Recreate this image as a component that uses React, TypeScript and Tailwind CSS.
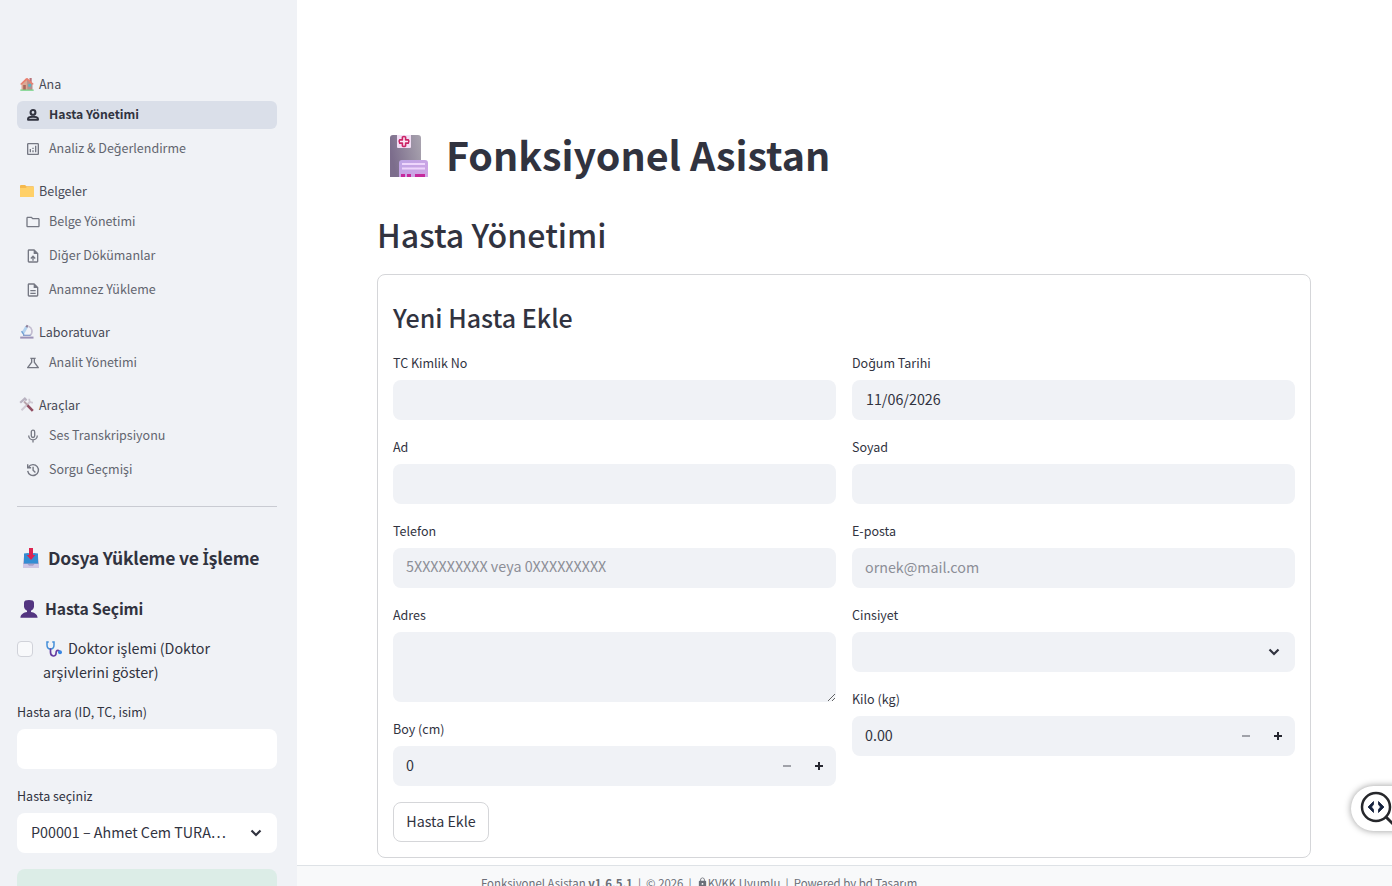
import type { ReactNode } from "react";
import { clsx } from "clsx";
import {
  MdOutlineAnalytics,
  MdOutlineDescription,
  MdOutlineFolder,
  MdOutlineScience,
  MdOutlineUploadFile,
  MdLock,
} from "react-icons/md";

const PersonIcon = () => (
  <svg
    width="16"
    height="16"
    viewBox="0 0 16 16"
    fill="none"
    stroke="#31333f"
    strokeWidth="2.1"
    strokeLinejoin="round"
  >
    <circle cx="8" cy="5.4" r="2.4" />
    <path d="M3.1 12.7v-.9c0-1.4 2.7-2.1 4.9-2.1s4.9.7 4.9 2.1v.9z" />
  </svg>
);

const MicIcon = () => (
  <svg width="16" height="16" viewBox="0 0 16 16" fill="none" stroke="currentColor" strokeWidth="1.3">
    <rect x="6.3" y="2.2" width="3.4" height="7.3" rx="1.7" />
    <path d="M3.7 7.5a4.3 4.3 0 0 0 8.6 0M8 11.800v2.600" />
  </svg>
);

const HistoryIcon = () => (
  <svg width="16" height="16" viewBox="0 0 16 16" fill="none" stroke="currentColor" strokeWidth="1.4">
    <path d="M2.700 8.800A5.400 5.400 0 1 0 3.600 5" />
    <path d="M2.700 2.300v3.400h3.400M8.100 4.800v3.500l2.300 2.200" />
  </svg>
);

const HouseEmoji = () => (
  <svg width="16" height="16" viewBox="0 0 16 16">
    <path d="M10.5 2h2.2v4h-2.2z" fill="#b9737a" />
    <path d="M2.5 7.5 8 3l5 4.5V14H2.5z" fill="#dba994" />
    <path d="M8 3.2 13.5 8v6H8.4z" fill="#b98f8b" />
    <path d="M1.2 8 7 2.2 8.4 2 14.8 8l-1.2.8L8 4 2.2 9z" fill="#e88070" />
    <path d="M4.2 9h2.6v5H4.2z" fill="#a9685c" />
    <path d="M9.3 8h2.8v2.7H9.3z" fill="#56b8c5" />
    <path d="M1.3 13.5h13.4v1.3H1.3z" fill="#76d287" />
  </svg>
);

const FolderEmoji = () => (
  <svg width="16" height="16" viewBox="0 0 16 16">
    <path d="M1 3a1 1 0 0 1 1-1h4l1.5 1.3H14a1 1 0 0 1 1 1V13a1 1 0 0 1-1 1H2a1 1 0 0 1-1-1z" fill="#f5b94e" />
    <path d="M1 5h5.5L8 4h7v9a1 1 0 0 1-1 1H2a1 1 0 0 1-1-1z" fill="#ffd068" />
  </svg>
);

const MicroscopeEmoji = () => (
  <svg width="16" height="16" viewBox="0 0 16 16" fill="none">
    <path d="M9.5 2.2c3.6 1.3 4.9 6 1.6 9.3" stroke="#c3bdd0" strokeWidth="1.6" />
    <path d="M7.8 2.6 3.7 9.4" stroke="#b4d2ef" strokeWidth="3" />
    <path d="m8.6 1.2-1.2 2" stroke="#8b7c96" strokeWidth="2" />
    <path d="M2.6 7.2 5 11" stroke="#6f9fd2" strokeWidth="1.3" />
    <path d="M4 11.3h7.5" stroke="#8297c8" strokeWidth="1.2" />
    <path d="M1.2 13.6h13.3" stroke="#9c92b7" strokeWidth="2" />
  </svg>
);

const ToolsEmoji = () => (
  <svg width="16" height="16" viewBox="0 0 16 16" fill="none">
    <path d="m2.5 13.2 9-9" stroke="#cfcad4" strokeWidth="2" />
    <path d="M10.2 1.8c0 3 1.2 4 3.8 3.8" stroke="#cfcad4" strokeWidth="1.8" />
    <path d="m1.2 5.8 4.6-4.2 1.8 2" stroke="#b9b3c1" strokeWidth="2.2" />
    <path d="m5 4.5 4 4" stroke="#b9a5ad" strokeWidth="1.8" />
    <path d="m8.5 8.3 5.3 5.6" stroke="#914e62" strokeWidth="2.6" />
  </svg>
);

const InboxEmoji = () => (
  <svg width="20" height="22" viewBox="0 0 20 22">
    <path d="M3.2 8h13.6l1.2 10v2.5H2V18z" fill="#a8a0c8" />
    <path d="M3 6.5 7 6l3 1 3-1 4 .5v10H3z" fill="#338dd3" />
    <path d="M2 17h4.5l1.5 1.8h4l1.5-1.8H18v3.5H2z" fill="#cfc6e6" />
    <path d="M8 1h4v7h2.3L10 13 5.700 8H8z" fill="#dd2450" />
  </svg>
);

const BustEmoji = () => (
  <svg width="18" height="20" viewBox="0 0 18 20" fill="#533580">
    <path d="M4 3.5C4 1.8 6 1 9 1s5 .8 5 2.500v3.700C14 10 11.500 12 9 12S4 10 4 7.200z" />
    <path d="M7 10.500h4v2.600c3 .6 6.400 2 6.600 5.700H.4C.6 15.100 4 13.700 7 13.100z" />
  </svg>
);

const StethoscopeEmoji = () => (
  <svg width="18" height="18" viewBox="0 0 18 18" fill="none" strokeLinecap="round">
    <path d="M3.2 2H2v3c0 2.7 1.6 4 3.500 4S9 7.700 9 5V2H7.800" stroke="#438fd9" strokeWidth="1.5" />
    <path d="M5.5 9v3.300c0 4.800 5.500 4.600 5.500 1.200 0-3.200 1.700-3.900 3.500-2.200" stroke="#643ba0" strokeWidth="1.7" />
    <circle cx="15" cy="12.3" r="2" fill="#3987e3" />
  </svg>
);

const HospitalEmoji = () => (
  <svg width="40" height="44" viewBox="0 0 40 44">
    <defs>
      <linearGradient id="tower" x1="0" x2="1" y1="0.3" y2="0">
        <stop stopColor="#7c6d8c" />
        <stop offset="1" stopColor="#aaa5b0" />
      </linearGradient>
      <linearGradient id="annex" x1="0" x2="1" y1="0" y2="1">
        <stop stopColor="#bea6e6" />
        <stop offset="1" stopColor="#d2a4e4" />
      </linearGradient>
    </defs>
    <path d="M1 4q0-3 3-3h25q3 0 3 3v39H1z" fill="url(#tower)" />
    <path d="M8 1h14v12q0 1-1 1H9q-1 0-1-1z" fill="#f2def5" />
    <path
      d="M13.4 3.2q1.6-1.4 3.2 0v2.700h2.700q1.400 1.600 0 3.200h-2.700v2.700q-1.600 1.400-3.200 0V9.100h-2.700q-1.400-1.600 0-3.200h2.700z"
      fill="#fce6f6"
      stroke="#cb2466"
      strokeWidth="1.6"
      strokeLinejoin="round"
    />
    <path d="M10 29q0-3 3-3h23q3 0 3 3v14H10z" fill="url(#annex)" />
    <path d="M13 30h23M13 34.5h23" stroke="#eed6fc" strokeWidth="2" />
    <path d="M12 40h4v3h-4zm6 0h4v3h-4zm8 0h10v3H26z" fill="#c52a9c" />
  </svg>
);

const Chevron = () => (
  <svg
    width="12"
    height="8"
    viewBox="0 0 12 8"
    fill="none"
    stroke="#31333f"
    strokeWidth="2.2"
  >
    <path d="M1.5 1.5 6 6l4.500-4.500" />
  </svg>
);

const navSections = [
  {
    title: "Ana",
    emoji: <HouseEmoji />,
    links: [
      { label: "Hasta Yönetimi", icon: <PersonIcon />, active: true },
      { label: "Analiz & Değerlendirme", icon: <MdOutlineAnalytics /> },
    ],
  },
  {
    title: "Belgeler",
    emoji: <FolderEmoji />,
    links: [
      { label: "Belge Yönetimi", icon: <MdOutlineFolder /> },
      { label: "Diğer Dökümanlar", icon: <MdOutlineUploadFile /> },
      { label: "Anamnez Yükleme", icon: <MdOutlineDescription /> },
    ],
  },
  {
    title: "Laboratuvar",
    emoji: <MicroscopeEmoji />,
    links: [{ label: "Analit Yönetimi", icon: <MdOutlineScience /> }],
  },
  {
    title: "Araçlar",
    emoji: <ToolsEmoji />,
    links: [
      { label: "Ses Transkripsiyonu", icon: <MicIcon /> },
      { label: "Sorgu Geçmişi", icon: <HistoryIcon /> },
    ],
  },
];

type NavLinkProps = { label: string; icon: ReactNode; active?: boolean };

const NavLink = ({ label, icon, active }: NavLinkProps) => (
  <a
    className={clsx(
      "flex h-7 items-center gap-2 rounded-md pl-2",
      active
        ? "bg-[#dadfe9] text-[12.2px] font-bold text-[#31333f]"
        : "text-[12.5px] text-[#62656f]",
    )}
  >
    <span className="flex w-4 shrink-0 justify-center text-[16px] text-[#757883]">
      {icon}
    </span>
    <span className="pb-0.5 leading-5">{label}</span>
  </a>
);

type FieldProps = { label: string; children: ReactNode };

const Field = ({ label, children }: FieldProps) => (
  <div>
    <label className="block h-7 text-[12.5px] leading-[22px]">{label}</label>
    {children}
  </div>
);

type TextInputProps = {
  value?: string;
  placeholder?: string;
  className?: string;
};

const TextInput = ({ value, placeholder, className }: TextInputProps) => (
  <input
    readOnly
    value={value ?? ""}
    placeholder={placeholder}
    className={clsx(
      "block h-10 w-full rounded-lg pr-3 text-[14.3px] outline-none placeholder:text-[#8c8e97]",
      className ?? "bg-[#f0f2f6] pb-1 pl-[13px]",
    )}
  />
);

const NumberInput = ({ value }: { value: string }) => (
  <div className="flex h-10 items-center rounded-lg bg-[#f0f2f6] pl-[13px] text-[14.3px]">
    <span className="flex-1 pb-0.5">{value}</span>
    <button className="flex w-8 justify-center">
      <svg width="10" height="10" stroke="#a0a2a9" strokeWidth="2">
        <path d="M1 5h8" />
      </svg>
    </button>
    <button className="mr-px flex w-8 justify-center">
      <svg width="10" height="10" stroke="#262730" strokeWidth="2">
        <path d="M1 5h8M5 1v8" />
      </svg>
    </button>
  </div>
);

const Sidebar = () => (
  <aside className="h-full w-[297px] shrink-0 overflow-hidden bg-[#f0f2f6] pr-5 pl-[17px]">
    <nav className="flex flex-col gap-[15px] pt-[71px]">
      {navSections.map((section) => (
        <div key={section.title}>
          <div className="mb-1 flex h-[26px] items-center gap-1 pl-0.5 text-[12.5px] text-[#484b57]">
            {section.emoji}
            <span>{section.title}</span>
          </div>
          <div className="flex flex-col gap-1.5">
            {section.links.map((link) => (
              <NavLink key={link.label} {...link} />
            ))}
          </div>
        </div>
      ))}
    </nav>
    <hr className="mt-[22px] border-[#c9cbd2]" />
    <h2 className="mt-9 flex h-[30px] items-center gap-[7px] pl-1 text-[17.5px] font-bold tracking-[-0.2px] whitespace-nowrap">
      <InboxEmoji />
      <span className="leading-7">
        Dosya Yükleme ve{" "}
        <span className="font-['Noto_Sans'] font-semibold">İ</span>şleme
      </span>
    </h2>
    <h3 className="mt-[21px] flex h-[30px] items-center gap-[7px] pl-[3px] text-[15.7px] font-bold tracking-[-0.1px]">
      <BustEmoji />
      <span>Hasta Seçimi</span>
    </h3>
    <label className="mt-[13px] flex gap-2.5 text-[14.3px] leading-6">
      <span className="mt-1 size-4 shrink-0 rounded border border-[#d0d2d9] bg-[#f8f9fb]" />
      <span className="-mt-px mb-px">
        <span className="mr-[5px] ml-0.5 inline-block align-[-4px]">
          <StethoscopeEmoji />
        </span>
        Doktor işlemi (Doktor
        <br />
        arşivlerini göster)
      </span>
    </label>
    <div className="mt-4 flex flex-col gap-4">
      <Field label="Hasta ara (ID, TC, isim)">
        <TextInput className="bg-white pl-3" />
      </Field>
      <Field label="Hasta seçiniz">
        <div className="flex h-10 items-center justify-between rounded-lg bg-white pr-[15px] pl-3.5 text-[14.3px]">
          <span className="pb-0.5">P00001 – Ahmet Cem TURA…</span>
          <Chevron />
        </div>
      </Field>
      <div className="h-14 rounded-lg bg-[#dcede7]" />
    </div>
  </aside>
);

const PatientForm = () => (
  <form className="h-[584px] rounded-lg border border-[#d5d6d9] px-[15px] pt-6">
    <h3 className="h-[53px] text-[25px] leading-[36px] font-medium">
      Yeni Hasta Ekle
    </h3>
    <div className="grid grid-cols-2 items-start gap-4">
      <div className="flex flex-col gap-4">
        <Field label="TC Kimlik No">
          <TextInput />
        </Field>
        <Field label="Ad">
          <TextInput />
        </Field>
        <Field label="Telefon">
          <TextInput
            placeholder="5XXXXXXXXX veya 0XXXXXXXXX"
            className="bg-[#f0f2f6] pb-1.5 pl-[13px]"
          />
        </Field>
        <Field label="Adres">
          <textarea
            readOnly
            className="block h-[70px] w-full resize-y rounded-lg bg-[#f0f2f6]"
          />
        </Field>
        <Field label="Boy (cm)">
          <NumberInput value="0" />
        </Field>
      </div>
      <div className="flex flex-col gap-4">
        <Field label="Doğum Tarihi">
          <TextInput value="11/06/2026" className="bg-[#f0f2f6] pb-1 pl-3.5" />
        </Field>
        <Field label="Soyad">
          <TextInput />
        </Field>
        <Field label="E-posta">
          <TextInput placeholder="ornek@mail.com" />
        </Field>
        <Field label="Cinsiyet">
          <div className="flex h-10 items-center justify-end rounded-lg bg-[#f0f2f6] pr-[15px]">
            <Chevron />
          </div>
        </Field>
        <Field label="Kilo (kg)">
          <NumberInput value="0.00" />
        </Field>
      </div>
    </div>
    <button className="mt-4 h-10 w-24 rounded-lg border border-[#d5d6d9] pb-0.5 text-[14.3px]">
      Hasta Ekle
    </button>
  </form>
);

const Footer = () => (
  <footer className="mt-[7px] flex h-10 items-start border-t border-[#dee2e6] bg-[#f8f9fa] pt-[7px] pl-[184px] text-[11.4px] leading-5 whitespace-pre text-[#6c6f78]">
    <span>
      Fonksiyonel Asistan <b className="font-bold">v1.6.5.1</b>
      {"  |  © 2026  |  "}
    </span>
    <MdLock className="mt-1 text-[11px]" />
    <span>{"KVKK Uyumlu  |  Powered by bd Tasarım"}</span>
  </footer>
);

const App = () => {
  return (
    <div className="relative flex h-[886px] w-full overflow-hidden bg-white font-['Noto_Sans_CJK_SC','Noto_Sans',sans-serif] text-[#31333f]">
      <Sidebar />
      <main className="flex-1">
        <div className="pr-[81px] pl-20">
          <h1 className="mt-[123px] flex h-[66px] items-center gap-[17px] pl-3 text-[39.4px] font-bold">
            <HospitalEmoji />
            <span className="pb-1 leading-[56px]">Fonksiyonel Asistan</span>
          </h1>
          <h2 className="mt-[19px] mb-[14px] h-[52px] text-[32.1px] leading-[52px] font-medium">
            Hasta Yönetimi
          </h2>
          <PatientForm />
        </div>
        <Footer />
      </main>
      {/* Inspector handle hanging off the right edge */}
      <div className="absolute top-[786px] -right-5 flex h-[45px] w-[61px] items-center rounded-l-full bg-white pl-[9px] shadow-[0_0_7px_rgba(0,0,0,0.4)]">
        <svg width="36" height="36" viewBox="0 0 36 36" fill="none">
          <circle cx="16" cy="16" r="14" stroke="#26272b" strokeWidth="2.5" />
          <path d="m26 26 8 8" stroke="#26272b" strokeWidth="3" />
          <path
            d="M13.500 10.500v3L11.500 16l2 2.500v3L8 16zM18.500 10.500v3l2 2.500-2 2.500v3L24 16z"
            fill="#14213d"
            stroke="#14213d"
            strokeWidth="0.8"
          />
        </svg>
      </div>
    </div>
  );
};

export default App;
